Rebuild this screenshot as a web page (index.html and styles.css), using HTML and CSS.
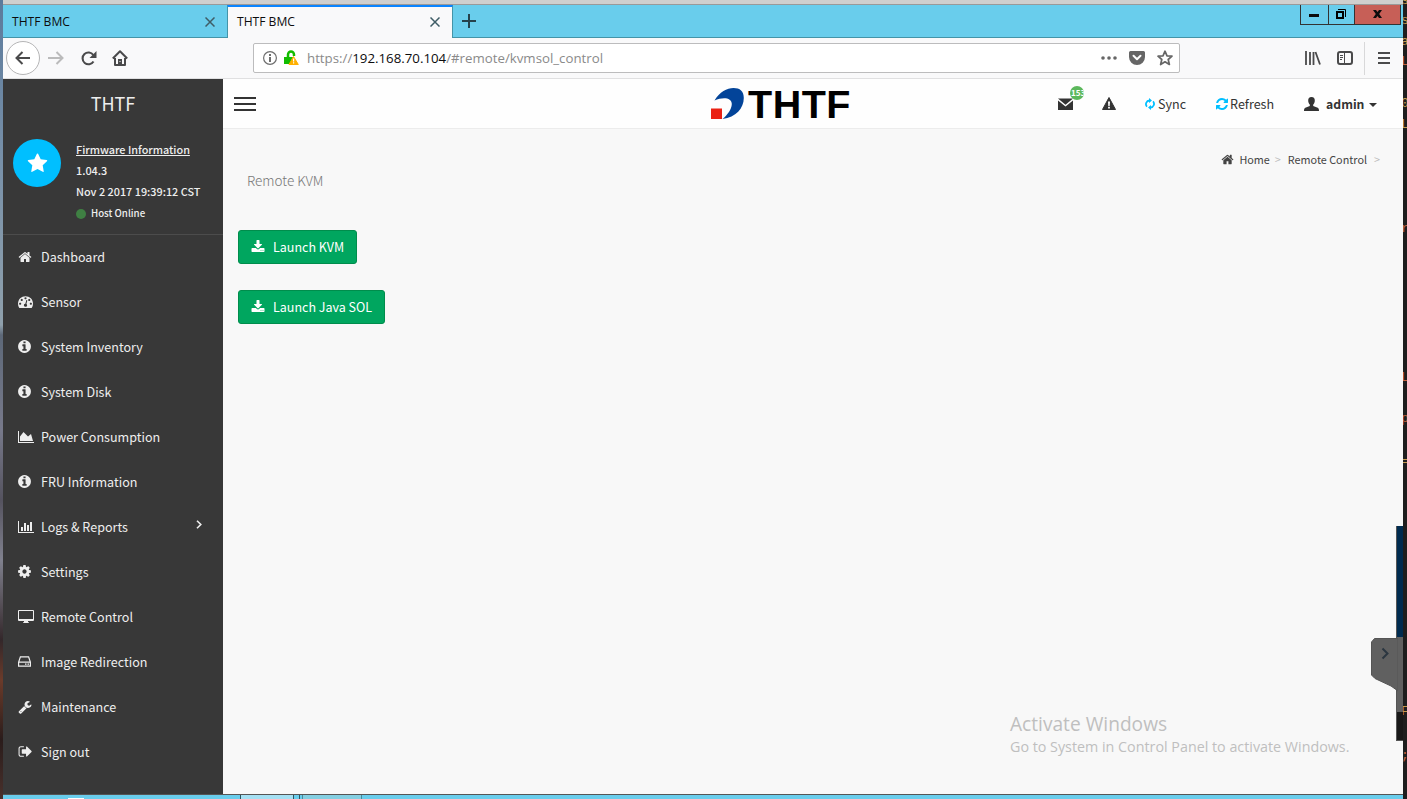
FILE: index.html
```html
<!DOCTYPE html>
<html lang="en">
<head>
<meta charset="utf-8">
<title>THTF BMC</title>
<link rel="stylesheet" href="styles.css">
</head>
<body>
<svg class="defs" width="0" height="0">
<symbol id="home" viewBox="0 0 1792 1792"><path d="M1472 992v480q0 26-19 45t-45 19h-384v-384h-256v384h-384q-26 0-45-19t-19-45v-480q0-1 .5-3t.5-3l575-474 575 474q1 2 1 6zm223-69l-62 74q-8 9-21 11h-3q-13 0-21-7l-692-577-692 577q-12 8-24 7-13-2-21-11l-62-74q-8-10-7-23.5t11-21.5l719-599q32-26 76-26t76 26l244 204v-195q0-14 9-23t23-9h192q14 0 23 9t9 23v408l219 182q10 8 11 21.5t-7 23.5z"/></symbol>
<symbol id="gauge" viewBox="0 0 1792 1792"><path d="M384 1152q0-53-37.5-90.5t-90.5-37.5-90.5 37.5-37.5 90.5 37.5 90.5 90.5 37.5 90.5-37.5 37.5-90.5zm192-448q0-53-37.5-90.5t-90.5-37.5-90.5 37.5-37.5 90.5 37.5 90.5 90.5 37.5 90.5-37.5 37.5-90.5zm428 481l101-382q6-26-7.5-48.5t-38.5-29.5-48 6.5-30 39.5l-101 382q-60 5-107 43.5t-63 98.5q-20 77 20 146t117 89 146-20 89-117q16-60-6-117t-72-91zm660-33q0-53-37.5-90.5t-90.5-37.5-90.5 37.5-37.5 90.5 37.5 90.5 90.5 37.5 90.5-37.5 37.5-90.5zm-640-640q0-53-37.5-90.5t-90.5-37.5-90.5 37.5-37.5 90.5 37.5 90.5 90.5 37.5 90.5-37.5 37.5-90.5zm448 192q0-53-37.5-90.5t-90.5-37.5-90.5 37.5-37.5 90.5 37.5 90.5 90.5 37.5 90.5-37.5 37.5-90.5zm320 448q0 261-141 483-19 29-54 29h-1402q-35 0-54-29-141-221-141-483 0-182 71-348t191-286 286-191 348-71 348 71 286 191 191 286 71 348z"/></symbol>
<symbol id="info" viewBox="0 0 1792 1792"><path d="M1152 1376v-160q0-14-9-23t-23-9h-96v-512q0-14-9-23t-23-9h-320q-14 0-23 9t-9 23v160q0 14 9 23t23 9h96v320h-96q-14 0-23 9t-9 23v160q0 14 9 23t23 9h448q14 0 23-9t9-23zm-128-896v-160q0-14-9-23t-23-9h-192q-14 0-23 9t-9 23v160q0 14 9 23t23 9h192q14 0 23-9t9-23zm640 416q0 209-103 385.5t-279.5 279.5-385.5 103-385.5-103-279.5-279.5-103-385.5 103-385.5 279.5-279.5 385.5-103 385.5 103 279.5 279.5 103 385.5z"/></symbol>
<symbol id="area" viewBox="0 0 2048 1792"><path d="M2048 1536v128h-2048v-1536h128v1408h1920zm-384-1024l256 896h-1664v-576l448-576 576 576z"/></symbol>
<symbol id="bars" viewBox="0 0 2048 1792"><path d="M640 896v512h-256v-512h256zm384-512v1024h-256v-1024h256zm1024 1152v128h-2048v-1536h128v1408h1920zm-640-896v768h-256v-768h256zm384-384v1152h-256v-1152h256z"/></symbol>
<symbol id="cog" viewBox="0 0 1792 1792"><path d="M1152 896q0-106-75-181t-181-75-181 75-75 181 75 181 181 75 181-75 75-181zm512-109v222q0 12-8 23t-20 13l-185 28q-19 54-39 91 35 50 107 138 10 12 10 25t-9 23q-27 37-99 108t-94 71q-12 0-26-9l-138-108q-44 23-91 38-16 136-29 186-7 28-36 28h-222q-14 0-24.5-8.5t-11.5-21.5l-28-184q-49-16-90-37l-141 107q-10 9-25 9-14 0-25-11-126-114-165-168-7-10-7-23 0-12 8-23 15-21 51-66.5t54-70.5q-27-50-41-99l-183-27q-13-2-21-12.5t-8-23.5v-222q0-12 8-23t19-13l186-28q14-46 39-92-40-57-107-138-10-12-10-24 0-10 9-23 26-36 98.5-107.5t94.5-71.5q13 0 26 10l138 107q44-23 91-38 16-136 29-186 7-28 36-28h222q14 0 24.5 8.5t11.5 21.5l28 184q49 16 90 37l142-107q9-9 24-9 13 0 25 10 129 119 165 170 7 8 7 22 0 12-8 23-15 21-51 66.5t-54 70.5q26 50 41 98l183 28q13 2 21 12.5t8 23.5z"/></symbol>
<symbol id="screen" viewBox="0 0 16 14"><path fill-rule="evenodd" d="M1 0h14a1 1 0 0 1 1 1v9a1 1 0 0 1-1 1h-5v1l1 .5V13H5v-.5L6 12v-1H1a1 1 0 0 1-1-1V1a1 1 0 0 1 1-1zm0 1v8h14V1z"/></symbol>
<symbol id="disk" viewBox="0 0 13 11"><path fill="none" stroke="currentColor" stroke-width="1.2" d="M.6 6.2 2.4.9h8.2l1.8 5.3v4H.6zH12.4"/><path d="M7 7.600h1.500v1.200H7zm2.500 0H11v1.200H9.500z"/></symbol>
<symbol id="wrench" viewBox="0 0 1792 1792"><path d="M448 1472q0-26-19-45t-45-19-45 19-19 45 19 45 45 19 45-19 19-45zm644-420l-682 682q-37 37-90 37-52 0-91-37l-106-108q-38-36-38-90 0-53 38-91l681-681q39 98 114.500 173.500t173.500 114.500zm634-435q0 39-23 106-47 134-164.500 217.500t-258.500 83.500q-185 0-316.500-131.500t-131.500-316.500 131.500-316.500 316.500-131.500q58 0 121.500 16.500t107.500 46.500q16 11 16 28t-16 28l-293 169v224l193 107q5-3 79-48.500t135.500-81 70.500-35.500q15 0 23.500 10t8.500 25z"/></symbol>
<symbol id="exit" viewBox="0 0 1792 1792"><path d="M704 1440q0 4 1 20t.5 26.500-3 23.500-10 19.500-20.500 6.500h-320q-119 0-203.500-84.500t-84.500-203.500v-704q0-119 84.500-203.500t203.500-84.500h320q13 0 22.500 9.500t9.500 22.500q0 4 1 20t.5 26.500-3 23.500-10 19.500-20.500 6.500h-320q-66 0-113 47t-47 113v704q0 66 47 113t113 47h312l11.500 1 11.500 3 8 5.500 7 9 2 13.500zm928-544q0 26-19 45l-544 544q-19 19-45 19t-45-19-19-45v-288h-448q-26 0-45-19t-19-45v-384q0-26 19-45t45-19h448v-288q0-26 19-45t45-19 45 19l544 544q19 19 19 45z"/></symbol>
<symbol id="download" viewBox="0 0 1792 1792"><path d="M1344 1344q0-26-19-45t-45-19-45 19-19 45 19 45 45 19 45-19 19-45zm256 0q0-26-19-45t-45-19-45 19-19 45 19 45 45 19 45-19 19-45zm128-224v320q0 40-28 68t-68 28h-1472q-40 0-68-28t-28-68v-320q0-40 28-68t68-28h465l135 136q58 56 136 56t136-56l136-136h464q40 0 68 28t28 68zm-325-569q17 41-14 70l-448 448q-18 19-45 19t-45-19l-448-448q-31-29-14-70 17-39 59-39h256v-448q0-26 19-45t45-19h256q26 0 45 19t19 45v448h256q42 0 59 39z"/></symbol>
<symbol id="refresh" viewBox="0 0 1792 1792"><path d="M1639 1056q0 5-1 7-64 268-268 434.500t-478 166.500q-146 0-282.500-55t-243.500-157l-129 129q-19 19-45 19t-45-19-19-45v-448q0-26 19-45t45-19h448q26 0 45 19t19 45-19 45l-137 137q71 66 161 102t187 36q134 0 250-65t186-179q11-17 53-117 8-23 30-23h192q13 0 22.500 9.500t9.500 22.500zm25-800v448q0 26-19 45t-45 19h-448q-26 0-45-19t-19-45 19-45l138-138q-148-137-349-137-134 0-250 65t-186 179q-11 17-53 117-8 23-30 23h-199q-13 0-22.500-9.500t-9.500-22.500v-7q65-268 270-434.500t480-166.500q146 0 284 55.500t245 156.500l130-129q19-19 45-19t45 19 19 45z"/></symbol>
<symbol id="star" viewBox="0 0 1792 1792"><path d="M1728 647q0 22-26 48l-363 354 86 500q1 7 1 20 0 21-10.500 35.500t-30.500 14.500q-19 0-40-12l-449-236-449 236q-22 12-40 12-21 0-31.500-14.500t-10.500-35.500q0-6 2-20l86-500-364-354q-25-27-25-48 0-37 56-46l502-73 225-455q19-41 49-41t49 41l225 455 502 73q56 9 56 46z"/></symbol>
<symbol id="close" viewBox="0 0 10 10"><path fill="none" stroke="currentColor" stroke-width="1.500" d="M.5.5l9 9m0-9l-9 9"/></symbol>
</svg>
<div class="desktop">
<div class="wallpaper"></div>
<div class="window">
  <div class="topline"></div>
  <div class="tabs">
    <div class="tab"><span>THTF BMC</span><svg width="10" height="10"><use href="#close"/></svg></div>
    <div class="tab active"><span>THTF BMC</span><svg width="10" height="10"><use href="#close"/></svg></div>
    <div class="newtab"><svg width="14" height="14" viewBox="0 0 14 14"><path stroke="#25424c" stroke-width="2" d="M7 0v14M0 7h14"/></svg></div>
    <div class="winbtns">
      <div class="wb min"><svg width="10" height="3"><path d="M0 0h10v3H0z"/></svg></div>
      <div class="wb max"><svg width="10" height="10" viewBox="0 0 10 10"><path fill="none" stroke="#000" stroke-width="2" d="M1 3h6v6H1z"/><path fill="none" stroke="#000" d="M2 .5h7.500V8"/></svg></div>
      <div class="wb cls"><svg width="9" height="8" viewBox="0 0 9 8"><path d="M0 0h3l1.500 2L6 0h3L6.200 4 9 8H6L4.500 6 3 8H0l2.800-4z"/></svg></div>
    </div>
  </div>
  <div class="toolbar">
    <div class="back"><svg width="16" height="14" viewBox="0 0 16 14"><path fill="none" stroke="#4a4a4b" stroke-width="2" d="M15 7H1.500M7.500 1l-6 6 6 6"/></svg></div>
    <svg class="fwd" width="16" height="14" viewBox="0 0 16 14"><path fill="none" stroke="#bbb" stroke-width="2" d="M0 7h14.500M8.500 1l6 6-6 6"/></svg>
    <svg class="reload" width="16" height="15" viewBox="0 0 16 15"><path fill="none" stroke="#4a4a4b" stroke-width="2.100" d="M12.500 10.500A5.900 5.900 0 1 1 12.300 4"/><path fill="#4a4a4b" d="M15.500 0v7H8.500z"/></svg>
    <svg class="hm" width="16" height="16" viewBox="0 0 16 16"><path fill="none" stroke="#4a4a4b" stroke-width="2" stroke-linejoin="round" d="M.8 8.500 8 1.300l7.200 7.200M3 8v7h10V8"/><path fill="#4a4a4b" d="M6 9h4v6H6z"/><path fill="#fff" d="M7.500 11h1v1h-1z"/></svg>
    <div class="url">
      <svg width="14" height="14" viewBox="0 0 14 14"><circle cx="7" cy="7" r="6.400" fill="none" stroke="#6e6e6e" stroke-width="1.200"/><path fill="#6e6e6e" d="M6 3h2v2H6zm0 3h2v5H6z"/></svg>
      <svg class="lock" width="15" height="16" viewBox="0 0 15 16"><path fill="none" stroke="#12bc00" stroke-width="2.500" d="M4 8V4.500a3 3 0 0 1 6 0V6"/><path fill="#12bc00" d="M0 7h10v7H0z"/><path fill="#ffb000" stroke="#ffb000" stroke-linejoin="round" d="M9.500 6.500 14.300 14.500H5z"/><path fill="#fff" d="M9 8.500h1.200v3H9zm0 3.800h1.200v1.200H9z"/></svg>
      <span class="addr">https://<b>192.168.70.104</b>/#remote/kvmsol_control</span>
      <svg class="dots" width="16" height="4" viewBox="0 0 16 4"><g fill="#666"><circle cx="2" cy="2" r="1.800"/><circle cx="8" cy="2" r="1.800"/><circle cx="14" cy="2" r="1.800"/></g></svg>
      <svg class="pocket" width="16" height="14" viewBox="0 0 16 14"><path fill="#666" d="M1.500 0h13A1.500 1.500 0 0 1 16 1.500V6A8 8 0 0 1 0 6V1.500A1.500 1.500 0 0 1 1.500 0z"/><path fill="none" stroke="#fff" stroke-width="2" stroke-linecap="round" stroke-linejoin="round" d="M4.500 4.800 8 8.200l3.500-3.400"/></svg>
      <svg class="fav" width="16" height="16" viewBox="0 0 16 16"><path fill="none" stroke="#666" stroke-width="1.700" stroke-linejoin="round" d="M8 1.200l2 4.600 5 .4-3.800 3.300L12.400 14.500 8 11.800l-4.400 2.700 1.200-5L1 6.200l5-.4z"/></svg>
    </div>
    <svg class="lib" width="16" height="14" viewBox="0 0 16 14"><path stroke="#4a4a4b" stroke-width="1.800" d="M1 0v14M5 1v13M8.500 1v13M10.500 1l4.500 12.500"/></svg>
    <svg class="side" width="16" height="14" viewBox="0 0 16 14"><rect x="1" y="1" width="14" height="12" rx="2" fill="none" stroke="#4a4a4b" stroke-width="2"/><path stroke="#4a4a4b" d="M7.500 1v12M3 4.500h3M3 6.500h3M3 8.500h2"/></svg>
    <div class="menu"><svg width="12" height="12" viewBox="0 0 12 12"><path stroke="#4a4a4b" stroke-width="2" d="M0 1h12M0 6h12M0 11h12"/></svg></div>
  </div>
  <div class="page">
    <aside class="sidebar">
      <div class="brand">THTF</div>
      <div class="firmware">
        <div class="avatar"><svg width="21" height="21"><use href="#star"/></svg></div>
        <div class="fw"><u>Firmware Information</u><span>1.04.3</span><span>Nov 2 2017 19:39:12 CST</span><div class="host"><i></i><em>Host Online</em></div></div>
      </div>
      <nav>
        <a><svg width="14" height="14"><use href="#home"/></svg><span>Dashboard</span></a>
        <a><svg width="15" height="15"><use href="#gauge"/></svg><span>Sensor</span></a>
        <a><svg class="sh" width="15" height="15"><use href="#info"/></svg><span>System Inventory</span></a>
        <a><svg class="sh" width="15" height="15"><use href="#info"/></svg><span>System Disk</span></a>
        <a><svg width="16" height="14"><use href="#area"/></svg><span>Power Consumption</span></a>
        <a><svg class="sh" width="15" height="15"><use href="#info"/></svg><span>FRU Information</span></a>
        <a><svg width="16" height="14"><use href="#bars"/></svg><span>Logs &amp; Reports</span><svg class="chev" width="6" height="9" viewBox="0 0 6 9"><path fill="none" stroke="currentColor" stroke-width="1.600" d="M1 .7l3.800 3.800L1 8.300"/></svg></a>
        <a><svg class="sh" width="15" height="15"><use href="#cog"/></svg><span>Settings</span></a>
        <a><svg width="16" height="14"><use href="#screen"/></svg><span>Remote Control</span></a>
        <a><svg width="13" height="11"><use href="#disk"/></svg><span>Image Redirection</span></a>
        <a><svg width="14" height="14"><use href="#wrench"/></svg><span>Maintenance</span></a>
        <a><svg width="15" height="15"><use href="#exit"/></svg><span>Sign out</span></a>
      </nav>
    </aside>
    <main>
      <header>
        <svg class="burger" width="22" height="14" viewBox="0 0 22 14"><path stroke="#333" stroke-width="2" d="M0 1h22M0 7h22M0 13h22"/></svg>
        <div class="logo"><svg width="34" height="32" viewBox="0 0 34 32"><path fill="#ea2113" d="M0 20.500h11V31H0z"/><path fill="#034499" d="M3.500 12.500C8.500 4 16 0 22.500 0c6.500 0 10.300 3 10.300 10C32.800 20 25 29.500 11.500 31 16.500 27 20.700 21 20.800 16 20.800 9.500 12 8.500 3.500 12.500z"/></svg><strong>THTF</strong></div>
        <div class="mail"><svg width="15" height="12" viewBox="0 0 15 12"><path fill="#333" d="M0 .5h15L7.500 6.800zM0 2.500l7.500 6L15 2.500V12H0z"/></svg><span class="badge">153</span></div>
        <svg class="warn" width="14" height="13" viewBox="0 0 14 13"><path fill="#333" stroke="#333" stroke-linejoin="round" d="M7 .5 13.500 12.500H.5z"/><path fill="#fff" d="M6 4.500h2L7.700 9H6.300zm.1 5.300h1.800v1.600H6.100z"/></svg>
        <div class="sync"><svg width="10" height="12" viewBox="0 0 10 12"><path fill="none" stroke="#00bfff" stroke-width="1.800" d="M4.500 2.500A3.600 3.600 0 0 0 2 8.600M5.500 9.500A3.600 3.600 0 0 0 8 3.400"/><path fill="#00bfff" d="M4 0v5l3-2.500zM6 7v5L3 9.500z"/></svg><span>Sync</span></div>
        <div class="refresh"><svg width="14" height="14"><use href="#refresh"/></svg><span>Refresh</span></div>
        <div class="admin"><svg width="15" height="14" viewBox="0 0 15 14"><path d="M7.500 0c2.300 0 3.500 1.500 3.300 4-.1 1.600-.8 2.700-1.600 3.600V9l4.500 1.800c1 .5 1.300 1.500 1.300 3.200H0c0-1.700.3-2.700 1.300-3.200L5.800 9V7.600C5 6.700 4.300 5.600 4.200 4 4 1.500 5.200 0 7.500 0z"/></svg><b>admin</b><i></i></div>
      </header>
      <div class="crumbs"><svg width="13" height="13"><use href="#home"/></svg><span>Home</span><i>&gt;</i><span>Remote Control</span><i class="last">&gt;</i></div>
      <h1>Remote KVM</h1>
      <div class="actions">
        <div class="btn"><svg width="14" height="14"><use href="#download"/></svg><span>Launch KVM</span></div>
        <div class="btn"><svg width="14" height="14"><use href="#download"/></svg><span>Launch Java SOL</span></div>
      </div>
      <div class="activate"><p class="a1">Activate Windows</p><p class="a2">Go to System in Control Panel to activate Windows.</p></div>
    </main>
  </div>
  <div class="taskbar"><div class="t0"></div><div class="t1"></div><div class="t2"></div></div>
  <div class="dock"></div>
  <svg class="handle" width="27" height="54" viewBox="0 0 27 54"><path fill="#606060" stroke="#555" d="M3.500.5H27V53L20 48 4 40.500.5 37V4z"/><path fill="none" stroke="#2b3640" stroke-width="2" d="M11.500 10.500l5 5-5 5"/></svg>
</div>
<div class="behind">
  <i style="top:-7px">s</i><i style="top:13px">s</i><i style="top:34px">a</i><i class="r" style="top:54px">L</i><i style="top:96px">0</i><i style="top:117px">L</i>
  <i class="r" style="top:221px">r</i><i class="r" style="top:370px">L</i><i class="r" style="top:411px">p</i><i style="top:454px">=</i><i style="top:704px">F</i><i class="r" style="top:748px">;</i>
</div>
</div>
</body>
</html>
```
FILE: styles.css
```css
* { box-sizing: border-box; }
body { margin: 0; width: 1407px; height: 799px; overflow: hidden; font-family: "Noto Sans CJK SC", "Noto Sans", sans-serif; font-size: 12.550px; color: #333; }
.defs { position: absolute; }
svg { display: block; flex: none; fill: currentColor; }
span, u, b, em, strong { white-space: nowrap; }
.desktop { display: grid; grid-template-columns: 3px 1400px 4px; height: 799px; }
.wallpaper { background: linear-gradient(#5b7a9c 0, #7890a8 160px, #8fa0ac 325px, #5d6878 335px, #77798a 430px, #55535f 500px, #80818e 560px, #33272a 640px, #6b3b2a 680px, #2a1c1b 740px, #49312c 799px); }
.window { position: relative; display: flex; flex-direction: column; min-width: 0; }
.topline { height: 5px; background: #cfcfce; border-bottom: 1px solid #999; }
.tabs { height: 33px; display: flex; background: #69cdec; font-family: "Open Sans", "Noto Sans", sans-serif; font-size: 12.100px; color: #0c0c0d; box-shadow: inset 0 -1px #4494a8; }
.tab { width: 224px; display: flex; align-items: center; justify-content: space-between; padding: 0 12px 0 9px; color: #0c0c0d; }
.tab svg { color: #3f5d66; }
.tab.active { width: 226px; background: #f9f9fa; border-top: 2px solid #0a84ff; border-left: 1px solid #4494a8; border-right: 1px solid #4494a8; padding: 0 12px 2px 9px; }
.newtab { padding: 9px; flex: 1; }
.winbtns { display: flex; height: 20px; margin-right: 2px; border: 1px solid #333; border-top: 0; }
.wb { width: 28px; display: flex; justify-content: center; align-items: center; border-right: 1px solid #333; padding: 0 1px 2px 0; }
.wb.max { width: 26px; }
.wb.cls { width: 45px; background: #c75f57; border: 0; }
.min svg { margin-top: 4px; }
.toolbar { height: 41px; display: flex; align-items: center; background: #f9f9fa; border-bottom: 1px solid #e0e0e1; }
.back { width: 34px; height: 34px; flex: none; margin-left: 3px; border: 1px solid #b5b5b6; border-radius: 50%; background: #fff; display: grid; place-items: center; }
.fwd { margin-left: 8px; }
.reload { margin-left: 17px; }
.hm { margin-left: 15px; }
.url { width: 927px; flex: none; height: 30px; margin-left: 125px; border: 1px solid #bcbcbd; border-radius: 2px; background: #fff; display: flex; align-items: center; padding-left: 9px; font-family: "Open Sans", "Noto Sans", sans-serif; font-size: 13.270px; color: #8a8a8a; }
.lock { margin: 0 8px 0 7px; }
.addr b { color: #0c0c0d; font-weight: 400; }
.dots { margin-left: auto; }
.pocket { margin-left: 12px; }
.fav { margin: 0 6px 0 12px; }
.lib { margin-left: 125px; }
.side { margin-left: 16px; }
.menu { height: 33px; margin-left: 11px; padding: 10px 0 0 13px; border-left: 1px solid #d8d8d9; }
.page { height: 715px; display: flex; }
.sidebar { width: 220px; background: #383838; color: #eee; }
.brand { height: 50px; text-align: center; font-size: 18px; line-height: 49px; }
.firmware { height: 106px; display: flex; padding: 10px 0 0 10px; border-bottom: 1px solid #4c4c4c; }
.avatar { width: 48px; height: 48px; border-radius: 50%; background: #00bfff; color: #fff; display: grid; place-items: center; }
.fw { margin-left: 15px; font-size: 10.850px; line-height: 21px; font-weight: 500; display: flex; flex-direction: column; align-items: flex-start; }
.host { display: flex; align-items: center; font-size: 9.700px; padding-top: 1px; }
.host i { width: 10px; height: 10px; border-radius: 50%; background: #3f8043; margin-right: 5px; }
.host em { font-style: normal; }
nav a { height: 45px; display: grid; grid-template-columns: 23px 1fr auto; align-items: center; padding: 0 21px 2px 15px; }
nav svg { margin-left: -.500px; }
nav .sh { margin-left: -1.500px; }
.chev { margin-bottom: 4px; }
main { position: relative; flex: 1; background: #f8f8f8; }
header { height: 50px; background: #fefefe; border-bottom: 1px solid #ececec; display: flex; align-items: center; }
.burger { margin-left: 11px; }
.logo { display: flex; align-items: center; margin-left: 455px; color: #000; }
.logo strong { width: 103px; font: 700 39.500px/40px "Liberation Sans", sans-serif; letter-spacing: .500px; margin: 0 0 0 3px; }
.mail { position: relative; margin-left: 207px; }
.badge { position: absolute; left: 12px; top: -12px; width: 14px; height: 14px; padding-left: 1px; border-radius: 50%; background: #5cb85c; color: #fff; font-size: 8px; line-height: 14px; font-weight: 700; overflow: hidden; }
.warn { margin-left: 29px; }
.sync { display: flex; align-items: center; margin-left: 29px; }
.sync span, .refresh span { margin-left: 3px; }
.refresh { display: flex; align-items: center; margin-left: 29px; }
.refresh svg, .sync svg { color: #00bfff; }
.refresh span { margin-left: 1px; }
.admin { display: flex; align-items: center; margin-left: 30px; }
.admin b { margin: 0 5px 0 7px; font-size: 12.200px; }
.admin i { border: 4px solid transparent; border-top-color: #333; border-bottom: 0; margin-top: 2px; }
.crumbs { height: 60px; display: flex; align-items: center; justify-content: flex-end; font-size: 10.800px; padding-right: 23px; color: #444; }
.crumbs span { margin-left: 5px; }
.crumbs i { font-style: normal; color: #bbb; margin: 0 2px 0 5px; }
.crumbs .last { margin: 0 0 0 7px; }
h1 { margin: -20px 0 0 24px; height: 61px; line-height: 22px; font-size: 13.500px; font-weight: 300; color: #777; }
.actions { display: flex; flex-direction: column; align-items: flex-start; gap: 26px; padding-left: 15px; }
.btn { height: 34px; border: 1px solid #008d4c; border-radius: 3px; background: #00a65f; color: #fff; display: flex; align-items: center; gap: 8px; padding: 0 11.500px 1px 12px; font-size: 12.500px; }
.activate { position: absolute; left: 787px; top: 632px; color: #bfbfbf; font-family: "Open Sans", sans-serif; }
.activate p { margin: 0; white-space: nowrap; }
.a1 { font-size: 19.150px; line-height: 26px; }
.a2 { font-size: 14.300px; line-height: 20px; }
.taskbar { height: 5px; border-top: 1px solid #555; background: #69cdec; display: flex; }
.t0 { width: 16px; height: 1px; margin: 3px 0 0 65px; background: #fff; }
.t1 { width: 60px; margin-left: 156px; background: #a5e0f3; border: solid #2c5560; border-width: 0 1px; box-shadow: inset -5px 0 #69cdec, inset -6px 0 #2c5560; }
.t2 { width: 60px; border: solid #488b9c; border-width: 0 1px; background: #84cfe2; margin-left: 2px; }
.dock { position: absolute; left: 1393px; top: 526px; width: 7px; height: 215px; border: 1px solid #555; border-width: 0 0 1px 1px; background: linear-gradient(#002b4f 111px, #606060 111px, #606060 186px, #181818 186px); }
.handle { position: absolute; left: 1368px; top: 638px; }
.behind { position: relative; background: #1e1e1e; overflow: hidden; }
.behind i { position: absolute; left: -2px; font: 13px/16px "Liberation Mono", monospace; color: #c49a4f; }
.behind .r { color: #c2633f; }
```
